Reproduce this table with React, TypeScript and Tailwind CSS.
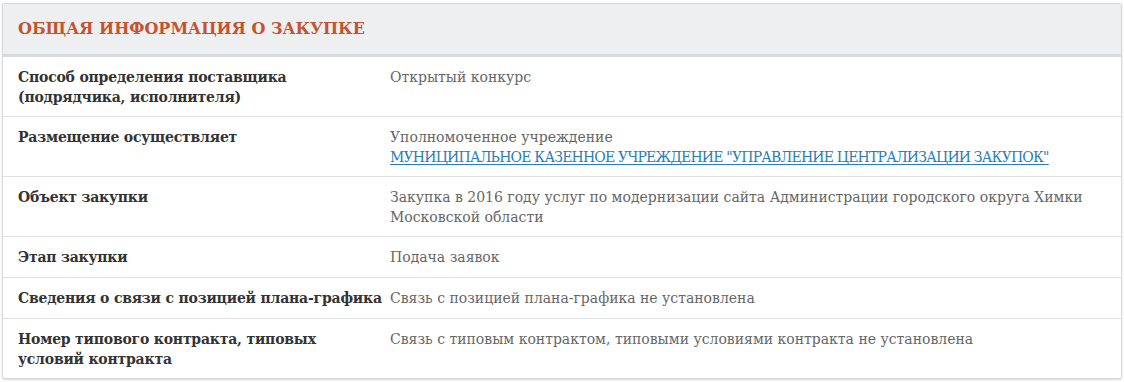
const rows: { label: string; value: React.ReactNode }[] = [
  { label: "Способ определения поставщика (подрядчика, исполнителя)", value: "Открытый конкурс" },
  {
    label: "Размещение осуществляет",
    value: (
      <>
        Уполномоченное учреждение
        <br />
        <a href="#" className="text-[#2a7db5] underline underline-offset-2 tracking-[-0.8px]">
          МУНИЦИПАЛЬНОЕ КАЗЕННОЕ УЧРЕЖДЕНИЕ "УПРАВЛЕНИЕ ЦЕНТРАЛИЗАЦИИ ЗАКУПОК"
        </a>
      </>
    ),
  },
  {
    label: "Объект закупки",
    value: "Закупка в 2016 году услуг по модернизации сайта Администрации городского округа Химки Московской области",
  },
  { label: "Этап закупки", value: "Подача заявок" },
  { label: "Сведения о связи с позицией плана-графика", value: "Связь с позицией плана-графика не установлена" },
  {
    label: "Номер типового контракта, типовых условий контракта",
    value: "Связь с типовым контрактом, типовыми условиями контракта не установлена",
  },
];

export default function App() {
  return (
    <div className="bg-white pt-[3px] px-[2px] w-[1124px] h-[382px]" style={{ fontFamily: '"DejaVu Serif", serif' }}>
      <div className="border border-[#d6d7d9] rounded-[2px] shadow-[0_1px_2px_rgba(0,0,0,0.15)]">
        <div className="bg-[#eeeff1] border-b-[3px] border-[#d8d9db] h-[53px] flex items-center px-[15px]">
          <h2 className="text-[16px] font-bold text-[#c4532e] uppercase">Общая информация о закупке</h2>
        </div>
        {rows.map((r, i) => (
          <div key={i} className={`flex min-h-[41px] text-[14px] leading-5 ${i > 0 ? "border-t border-[#e1e2e4]" : ""}`}>
            <div className="w-[387px] shrink-0 pl-[15px] pr-1 pt-[10px] pb-[9px] font-bold text-[#333] tracking-[-0.2px]">{r.label}</div>
            <div className="flex-1 pr-4 pt-[10px] pb-[9px] text-[#666]">{r.value}</div>
          </div>
        ))}
      </div>
    </div>
  );
}
